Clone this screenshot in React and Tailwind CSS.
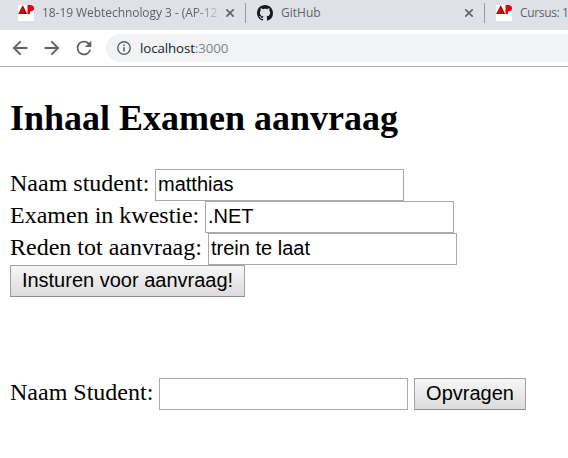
import React from "react";

const TAB_FONT = "font-['Open_Sans','Noto_Sans',sans-serif]";

function ApIcon() {
  return (
    <svg width="16" height="16" viewBox="0 0 16 16" className="block shrink-0">
      <rect width="16" height="16" fill="#fff" />
      <path d="M0 9 4.7 0.3 9 9Z" fill="#c90b12" />
      <path d="M4.7 0.3 9 9H6Z" fill="#8f0d12" />
      <path d="M9.5 0H12a4 3.2 0 0 1 0 6.4V9H9.5Z" fill="#e3000b" />
    </svg>
  );
}

function GithubIcon() {
  return (
    <svg width="16" height="16" viewBox="0 0 16 16" className="block shrink-0" fill="#15181c">
      <path d="M8 0C3.58 0 0 3.58 0 8c0 3.54 2.29 6.53 5.47 7.59.4.07.55-.17.55-.38 0-.19-.01-.82-.01-1.49-2.01.37-2.53-.49-2.69-.94-.09-.23-.48-.94-.82-1.13-.28-.15-.68-.52-.01-.53.63-.01 1.08.58 1.23.82.72 1.21 1.87.87 2.33.66.07-.52.28-.87.51-1.07-1.78-.2-3.64-.89-3.64-3.95 0-.87.31-1.59.82-2.15-.08-.2-.36-1.02.08-2.12 0 0 .67-.21 2.2.82.64-.18 1.32-.27 2-.27s1.36.09 2 .27c1.53-1.04 2.2-.82 2.2-.82.44 1.1.16 1.92.08 2.12.51.56.82 1.27.82 2.15 0 3.07-1.87 3.75-3.65 3.95.29.25.54.73.54 1.48 0 1.07-.01 1.93-.01 2.2 0 .21.15.46.55.38A8.01 8.01 0 0 0 16 8c0-4.42-3.58-8-8-8z" />
    </svg>
  );
}

function CloseIcon() {
  return (
    <svg width="8" height="8" viewBox="0 0 8 8" className="block shrink-0" stroke="#5f6368" strokeWidth="1.6">
      <path d="M0.3 0.3 7.7 7.7M7.7 0.3 0.3 7.7" />
    </svg>
  );
}

function Separator() {
  return <span className="h-5 w-px shrink-0 bg-[#96999e]" />;
}

function TextInput({ value, label }) {
  return (
    <input
      aria-label={label}
      defaultValue={value}
      className="h-8 w-[249px] border border-[#a9a9a9] bg-white px-[2px] pb-[2px] font-['Liberation_Sans',Arial,sans-serif] text-[20px] leading-[23px] text-black outline-none"
    />
  );
}

function Button({ children, width }) {
  return (
    <button
      className={`${width} h-8 whitespace-nowrap border border-[#a0a0a0] border-b-[#8c8c8c] bg-linear-to-b from-[#f6f6f6] to-[#dcdcdc] pb-px text-center font-['Liberation_Sans',Arial,sans-serif] text-[20px] leading-[23px] text-black`}
    >
      {children}
    </button>
  );
}

function Field({ label, value, gap }) {
  return (
    <div className="flex h-8 items-center">
      <label className={`${gap} shrink-0 whitespace-nowrap pb-[3px] leading-[27px]`}>{label}</label>
      <TextInput label={label} value={value} />
    </div>
  );
}

export default function App() {
  return (
    <div className="h-[458px] w-[568px] overflow-hidden bg-white">
      <div className={`${TAB_FONT} flex h-[30px] items-start overflow-hidden bg-[#dee1e6] text-[12px] leading-4 text-[#5f6368]`}>
        <div className="flex h-[26px] w-[245px] shrink-0 items-center pl-[18px]">
          <ApIcon />
          <span className="ml-2 w-[176px] overflow-hidden whitespace-nowrap tracking-[-0.06px] [mask-image:linear-gradient(to_right,black_152px,transparent_182px)]">
            18-19 Webtechnology 3 - (AP-12
          </span>
          <span className="ml-2">
            <CloseIcon />
          </span>
        </div>
        <div className="flex h-[26px] w-[239px] shrink-0 items-center">
          <Separator />
          <span className="ml-[11px]">
            <GithubIcon />
          </span>
          <span className="ml-2 flex-1">GitHub</span>
          <span className="mr-[11px]">
            <CloseIcon />
          </span>
        </div>
        <div className="flex h-[26px] shrink-0 items-center">
          <Separator />
          <span className="ml-[11px]">
            <ApIcon />
          </span>
          <span className="ml-2 whitespace-nowrap tracking-[-0.35px]">Cursus: 1</span>
        </div>
      </div>

      <div className="flex h-[37px] items-center border-b border-[#b3b3b3] pl-[9px]">
        <svg width="22" height="22" viewBox="0 0 24 24" fill="#5f6368" stroke="#5f6368" strokeWidth="0.2" className="shrink-0">
          <path d="M20 11H7.83l5.59-5.59L12 4l-8 8 8 8 1.41-1.41L7.83 13H20v-2z" />
        </svg>
        <svg width="22" height="22" viewBox="0 0 24 24" fill="#5f6368" stroke="#5f6368" strokeWidth="0.2" className="ml-[10px] shrink-0">
          <path d="M12 4l-1.41 1.41L16.17 11H4v2h12.17l-5.58 5.59L12 20l8-8z" />
        </svg>
        <svg width="22" height="22" viewBox="0 0 24 24" fill="#5f6368" className="ml-[10px] shrink-0">
          <path d="M17.65 6.35A7.96 7.96 0 0 0 12 4a8 8 0 1 0 7.73 10h-2.08A6 6 0 1 1 12 6c1.66 0 3.14.69 4.22 1.78L13 11h7V4l-2.35 2.35z" />
        </svg>
        <div className="ml-[11px] flex h-7 flex-1 items-center rounded-l-full bg-[#f1f3f4] pl-[11px]">
          <svg width="14" height="14" viewBox="0 0 14 14" className="shrink-0">
            <circle cx="7" cy="7" r="6.2" fill="none" stroke="#5f6368" strokeWidth="1.4" />
            <path d="M6.2 6.2h1.6V10.5H6.2zM6.2 3.5h1.6v1.6H6.2z" fill="#5f6368" />
          </svg>
          <span className="ml-[9px] font-['Open_Sans','Noto_Sans',sans-serif] text-[13.3px] leading-5 tracking-[-0.1px] text-[#202124]">
            localhost<span className="text-[#80868b]">:3000</span>
          </span>
        </div>
      </div>

      <main className="pl-[10px] pt-[31px] font-['Liberation_Serif','Times_New_Roman',serif] text-[24px] text-black">
        <h2 className="text-[36px] font-bold leading-[41px]">Inhaal Examen aanvraag</h2>
        <form className="mt-[30px]" onSubmit={(e) => e.preventDefault()}>
          <Field label="Naam student:" value="matthias" gap="w-[145px]" />
          <Field label="Examen in kwestie:" value=".NET" gap="w-[195px]" />
          <Field label="Reden tot aanvraag:" value="trein te laat" gap="w-[198px]" />
          <div className="flex h-8">
            <Button width="w-[235px]">Insturen voor aanvraag!</Button>
          </div>
        </form>
        <form className="mt-[81px] flex" onSubmit={(e) => e.preventDefault()}>
          <Field label="Naam Student:" value="" gap="w-[149px]" />
          <div className="ml-[6px] flex">
            <Button width="w-[112px]">Opvragen</Button>
          </div>
        </form>
      </main>
    </div>
  );
}
